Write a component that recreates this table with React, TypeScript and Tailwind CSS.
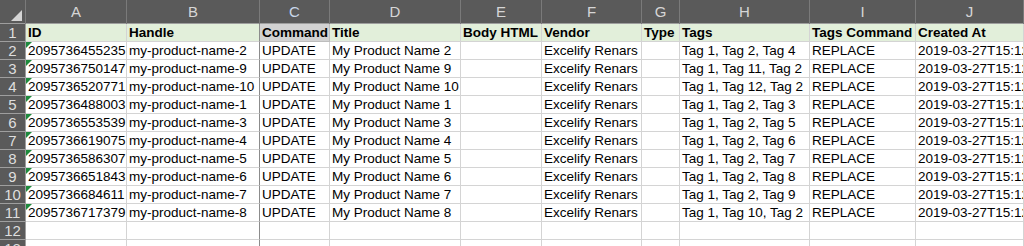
import React from 'react';

const cols = ['A', 'B', 'C', 'D', 'E', 'F', 'G', 'H', 'I', 'J'];

const headers = ['ID', 'Handle', 'Command', 'Title', 'Body HTML', 'Vendor', 'Type', 'Tags', 'Tags Command', 'Created At'];

const products: [string, string, string, string][] = [
  ['2095736455235', '2', '2', 'Tag 1, Tag 2, Tag 4'],
  ['2095736750147', '9', '9', 'Tag 1, Tag 11, Tag 2'],
  ['2095736520771', '10', '10', 'Tag 1, Tag 12, Tag 2'],
  ['2095736488003', '1', '1', 'Tag 1, Tag 2, Tag 3'],
  ['2095736553539', '3', '3', 'Tag 1, Tag 2, Tag 5'],
  ['2095736619075', '4', '4', 'Tag 1, Tag 2, Tag 6'],
  ['2095736586307', '5', '5', 'Tag 1, Tag 2, Tag 7'],
  ['2095736651843', '6', '6', 'Tag 1, Tag 2, Tag 8'],
  ['2095736684611', '7', '7', 'Tag 1, Tag 2, Tag 9'],
  ['2095736717379', '8', '8', 'Tag 1, Tag 10, Tag 2'],
];

const rows: string[][] = products.map(([id, h, n, tags]) => [
  id,
  `my-product-name-${h}`,
  'UPDATE',
  `My Product Name ${n}`,
  '',
  'Excelify Renars',
  '',
  tags,
  'REPLACE',
  '2019-03-27T15:12',
]);

const grid =
  'grid grid-cols-[26px_101px_133px_70px_131px_81px_100px_38px_130px_106px_1fr]';

function RowNum({ n }: { n: number }) {
  return (
    <div className="h-[18px] bg-[#5a5a5a] border-r border-b border-[#9e9e9e] text-[#dedede] text-[15px] leading-[18px] text-center">
      {n}
    </div>
  );
}

export default function App() {
  return (
    <div className="w-[1024px] h-[246px] overflow-hidden bg-white font-['Liberation_Sans',Arial,sans-serif] text-[13.5px] text-black">
      {/* column letters */}
      <div className={`${grid} h-[24px] bg-[#5a5a5a] border-b border-[#9e9e9e]`}>
        <div className="relative border-r border-[#7a7a7a]">
          <svg className="absolute right-[3px] bottom-[3px]" width="11" height="11" viewBox="0 0 11 11">
            <polygon points="11,0 11,11 0,11" fill="#d4d4d4" />
          </svg>
        </div>
        {cols.map((c) => (
          <div
            key={c}
            className={`border-r border-[#7a7a7a] text-center text-[15px] leading-[24px] ${
              c === 'C' ? 'text-[#c9d6ea]' : 'text-[#d6d6d6]'
            }`}
          >
            {c}
          </div>
        ))}
      </div>

      {/* header row */}
      <div className={grid}>
        <RowNum n={1} />
        {headers.map((h, i) => (
          <div
            key={h}
            className={`h-[18px] px-[2px] border-b border-r font-bold leading-[18px] whitespace-nowrap overflow-hidden ${
              i === 2
                ? 'bg-[#d2d2d2] border-[#bdbdbd] border-l border-l-[#8c8c8c] -ml-px'
                : 'bg-[#e2efda] border-[#d4d4d4]'
            }`}
          >
            {h}
          </div>
        ))}
      </div>

      {/* data rows */}
      {rows.map((r, ri) => (
        <div key={ri} className={grid}>
          <RowNum n={ri + 2} />
          {r.map((v, ci) => (
            <div
              key={ci}
              className={`relative h-[18px] px-[2px] border-b border-r border-[#d4d4d4] leading-[18px] whitespace-nowrap overflow-hidden ${
                ci === 2 ? 'border-l border-l-[#8c8c8c] -ml-px' : ''
              }`}
            >
              {ci === 0 && (
                <svg className="absolute left-0 top-0" width="6" height="6" viewBox="0 0 6 6">
                  <polygon points="0,0 6,0 0,6" fill="#1e8a3c" />
                </svg>
              )}
              {v}
            </div>
          ))}
        </div>
      ))}

      {/* empty rows */}
      {[12, 13].map((n) => (
        <div key={n} className={grid}>
          <RowNum n={n} />
          {cols.map((c) => (
            <div
              key={c}
              className={`h-[18px] border-b border-r border-[#d4d4d4] ${
                c === 'C' ? 'border-l border-l-[#8c8c8c] -ml-px' : ''
              }`}
            />
          ))}
        </div>
      ))}
    </div>
  );
}
